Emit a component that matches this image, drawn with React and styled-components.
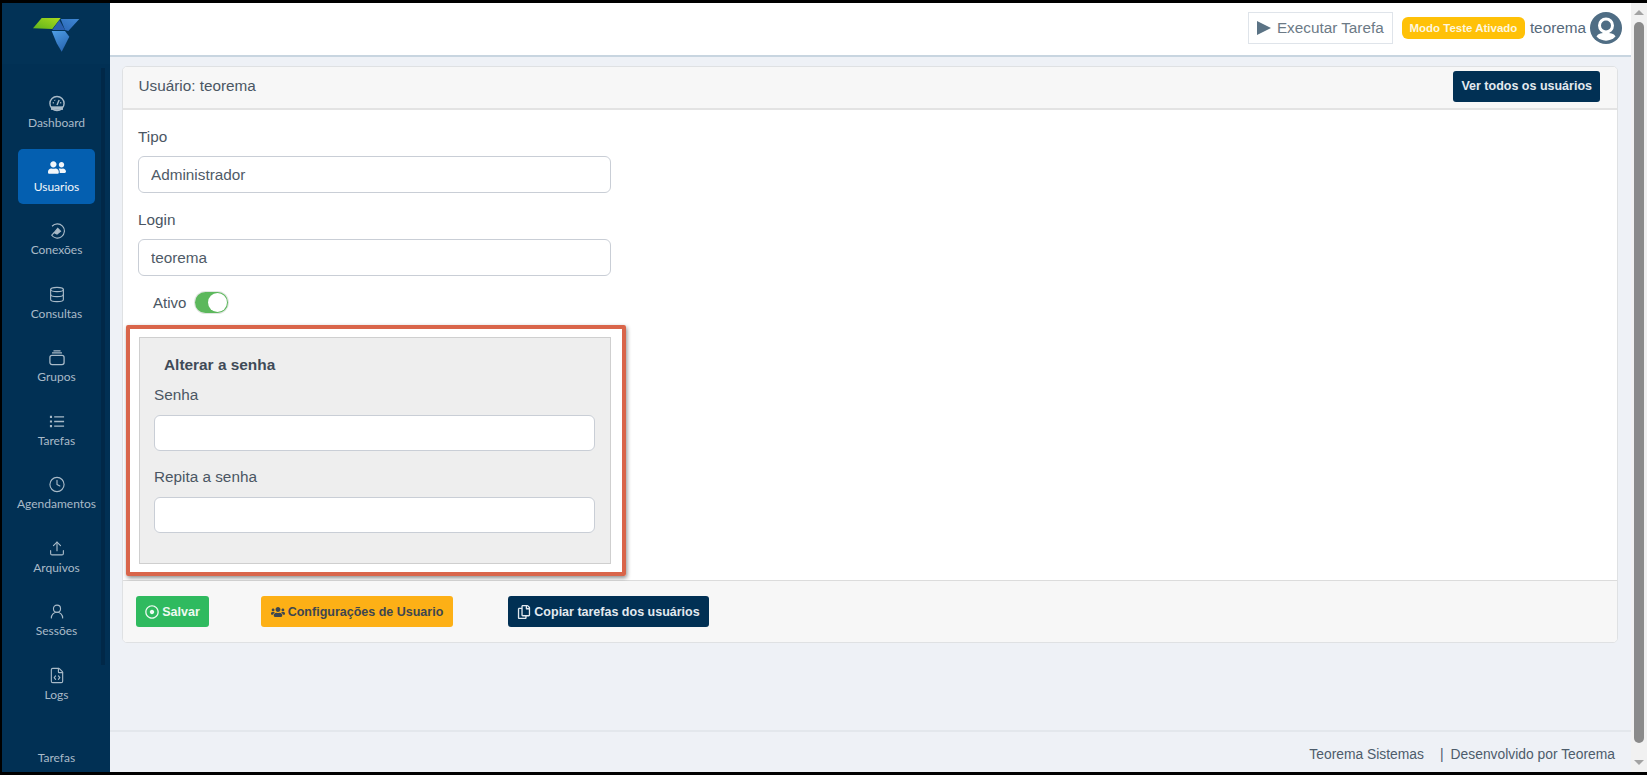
import React from "react";
import styled, { createGlobalStyle } from "styled-components";
import { Clock, Database, FileCode, Upload, UserRound } from "lucide-react";
import { FaUsers, FaUserFriends, FaRegDotCircle, FaRegCopy } from "react-icons/fa";

const GlobalStyle = createGlobalStyle`
  html, body {
    margin: 0;
    padding: 0;
    overflow: hidden;
    background: #000;
  }
  * {
    box-sizing: border-box;
  }
`;

const Frame = styled.div`
  width: 1647px;
  height: 775px;
  padding: 3px 0 3px 2px;
  display: flex;
  background: #000;
  font-family: "Liberation Sans", Arial, sans-serif;
  overflow: hidden;
`;

const Sidebar = styled.aside`
  width: 108px;
  flex: none;
  display: flex;
  flex-direction: column;
  background: #013054;
  overflow: hidden;
`;

const LogoBox = styled.div`
  height: 61px;
  flex: none;
  padding: 15px 0 0 31px;
  background: #023256;
`;

const Nav = styled.nav`
  position: relative;
  flex: 1;
  padding: 21px 0 0 16px;
`;

const NavTrack = styled.div`
  position: absolute;
  top: 4px;
  left: 99px;
  width: 4px;
  height: 597px;
  background: #012848;
`;

const NavItem = styled.a`
  width: 77px;
  height: 55px;
  margin-bottom: 8.5px;
  display: flex;
  flex-direction: column;
  align-items: center;
  justify-content: center;
  gap: 4px;
  border-radius: 5px;
  background: ${(p) => (p.$active ? "#045fb0" : "transparent")};
  color: ${(p) => (p.$active ? "#f2f6fa" : "#a9bac8")};
  font-family: Lato, "Liberation Sans", sans-serif;
  font-size: 12px;
  line-height: 14px;
  white-space: nowrap;

  svg {
    width: 18px;
    height: 17px;
    flex: none;
  }
`;

const TaskItem = styled(NavItem)`
  margin-top: 39px;
  height: auto;
  justify-content: flex-start;
  gap: 5px;
`;

const Main = styled.main`
  flex: 1;
  min-width: 0;
  display: flex;
  flex-direction: column;
  background: #eef1f6;
`;

const TopBar = styled.header`
  height: 54px;
  flex: none;
  display: flex;
  align-items: center;
  justify-content: flex-end;
  padding: 0 9px 2px 0;
  background: #fff;
  border-bottom: 2px solid #c8d5e0;
`;

const RunButton = styled.div`
  width: 145px;
  height: 32px;
  display: flex;
  align-items: center;
  gap: 6px;
  padding-left: 8px;
  margin-right: 9px;
  border: 1px solid #dfe4ea;
  color: #6c7a86;
  font-size: 15.3px;
  white-space: nowrap;
`;

const Badge = styled.span`
  width: 123px;
  height: 22px;
  display: flex;
  align-items: center;
  justify-content: center;
  border-radius: 6px;
  background: #ffc107;
  color: #fdf6df;
  font-size: 11.5px;
  font-weight: 700;
  white-space: nowrap;
`;

const UserName = styled.span`
  margin: 0 4px 0 5px;
  color: #55697a;
  font-size: 15.3px;
`;

const Content = styled.div`
  flex: 1;
  padding: 9px 13px 0 12px;
`;

const Card = styled.section`
  height: 577px;
  display: flex;
  flex-direction: column;
  border: 1px solid #dfe1e3;
  border-radius: 5px;
  background: #fff;
  overflow: hidden;
`;

const CardHeader = styled.div`
  height: 43px;
  flex: none;
  display: flex;
  align-items: center;
  justify-content: space-between;
  padding: 0 17px 3px 15.5px;
  background: #f7f7f7;
  border-bottom: 2px solid #e3e3e3;
  color: #4a5663;
  font-size: 15.3px;
`;

const Button = styled.button`
  height: 31px;
  display: inline-flex;
  align-items: center;
  justify-content: center;
  gap: 3px;
  padding: 0 8px;
  border: 0;
  border-radius: 3px;
  background: ${(p) => p.$bg};
  color: ${(p) => p.$fg};
  font-family: inherit;
  font-size: 12.5px;
  font-weight: ${(p) => p.$weight || 400};
  white-space: nowrap;

  svg {
    width: 14px;
    height: 14px;
    flex: none;
  }
`;

const CardBody = styled.div`
  flex: 1;
  padding: 17px 0 0 3px;
  border-bottom: 1px solid #dcdcdc;
`;

const Field = styled.div`
  width: 473px;
  margin: 0 0 ${(p) => p.$gap || 17}px 12px;
`;

const Label = styled.label`
  display: block;
  margin-bottom: 9px;
  color: #4a5663;
  font-size: 15.3px;
  line-height: 20px;
`;

const Input = styled.input`
  display: block;
  width: 100%;
  height: 37px;
  padding: 0 12px;
  border: 1px solid #c9ced6;
  border-radius: 6px;
  outline: none;
  background: #fff;
  color: #4f5b67;
  font-family: inherit;
  font-size: 15.3px;
`;

const ActiveRow = styled.div`
  display: flex;
  align-items: center;
  gap: 9px;
  height: 21px;
  margin: 0 0 12px 27px;
  color: #4a5663;
  font-size: 15px;
`;

const Toggle = styled.span`
  position: relative;
  width: 33px;
  height: 21px;
  border-radius: 11px;
  background: #5cb85c;
  box-shadow: 0 0 0 1px #e1e6e1;

  &::after {
    content: "";
    position: absolute;
    top: 1px;
    right: 1px;
    width: 19px;
    height: 19px;
    border-radius: 50%;
    background: #fff;
  }
`;

const Highlight = styled.div`
  width: 500px;
  height: 251px;
  padding: 8px 11px 8px 9px;
  border: 4px solid #d9654a;
  border-radius: 2px;
  box-shadow: 1px 2px 4px rgba(0, 0, 0, 0.45);
`;

const PasswordPanel = styled.div`
  height: 100%;
  padding: 18px 15px 0 14px;
  background: #eee;
  border: 1px solid #cfcfcf;
`;

const PanelTitle = styled.div`
  margin: 0 0 11px 10px;
  color: #3f4a57;
  font-size: 15.4px;
  font-weight: 700;
  line-height: 18px;
`;

const PanelField = styled.div`
  margin-bottom: ${(p) => p.$gap || 0}px;
`;

const PanelLabel = styled(Label)`
  margin-bottom: 10px;
`;

const PanelInput = styled(Input)`
  height: 36px;
`;

const CardFooter = styled.div`
  height: 61px;
  flex: none;
  display: flex;
  align-items: flex-start;
  padding: 15px 0 0 13px;
  background: #f7f7f7;
`;

const FooterButton = styled(Button)`
  margin-right: ${(p) => p.$gap}px;
  width: ${(p) => p.$width}px;
`;

const Footer = styled.footer`
  height: 42px;
  flex: none;
  display: flex;
  align-items: center;
  justify-content: flex-end;
  padding: 3px 16px 0 0;
  border-top: 2px solid #e3e7ec;
  color: #4d5c6b;
  font-size: 13.85px;
`;

const Divider = styled.span`
  margin: 0 7px 0 16px;
`;

const ScrollBar = styled.div`
  width: 16px;
  flex: none;
  display: flex;
  flex-direction: column;
  align-items: center;
  justify-content: space-between;
  padding: 7px 0;
  background: #f1f1f1;
`;

const ScrollThumb = styled.div`
  flex: 1;
  width: 10px;
  margin: 7px 0 17px;
  border-radius: 5px;
  background: #8a8a8a;
`;

const Arrow = styled.span`
  width: 0;
  height: 0;
  border-left: 5px solid transparent;
  border-right: 5px solid transparent;
  ${(p) =>
    p.$down
      ? "border-top: 5px solid #a3a3a3;"
      : "border-bottom: 5px solid #a3a3a3;"}
`;

const Logo = () => (
  <svg width="48" height="36" viewBox="0 0 48 36">
    <defs>
      <linearGradient id="logoGreen" x1="0" y1="1" x2="1" y2="0">
        <stop offset="0" stopColor="#5fb31c" />
        <stop offset="1" stopColor="#a8da1f" />
      </linearGradient>
      <linearGradient id="logoRight" x1="1" y1="0" x2="0" y2="1">
        <stop offset="0" stopColor="#3f88d4" />
        <stop offset="1" stopColor="#2b66b6" />
      </linearGradient>
      <linearGradient id="logoLower" x1="0" y1="0" x2="0.5" y2="1">
        <stop offset="0" stopColor="#4f9fe6" />
        <stop offset="1" stopColor="#2a68b4" />
      </linearGradient>
    </defs>
    <polygon points="0,10.300 8.700,0 27.700,0 19.300,11" fill="url(#logoGreen)" />
    <polygon points="27.700,1 46.300,1 35.300,13 32,12" fill="url(#logoRight)" />
    <polygon points="19.300,12 26.300,2 32,12" fill="#2a5fb0" />
    <polygon points="18.700,13 32,13 36.300,18.700 28.700,33.700 23.700,25.300" fill="url(#logoLower)" />
  </svg>
);

const GaugeIcon = () => (
  <svg viewBox="0 0 24 24" fill="none" stroke="currentColor" strokeWidth="2">
    <circle cx="12" cy="12" r="10" />
    <path d="M3.500 18.500h17" strokeWidth="5" />
    <path d="M12 14l3-7M6 11h1.500M16.500 11H18M8.500 7l.7.9" />
  </svg>
);

const PlugIcon = () => (
  <svg viewBox="0 0 24 24" fill="none" stroke="currentColor" strokeWidth="1.6">
    <path d="M5 6a10 10 0 1 1-1 12" />
    <path d="M8 15l5-6 4 4-5 4z" fill="currentColor" />
    <path d="M8 15l-3 3" />
  </svg>
);

const TrayIcon = () => (
  <svg viewBox="0 0 24 24" fill="none" stroke="currentColor" strokeWidth="1.8">
    <rect x="2" y="9" width="20" height="13" rx="3" />
    <path d="M5 5.500h14M7 2.500h10" />
  </svg>
);

const ListIcon = () => (
  <svg viewBox="0 0 24 24" fill="none" stroke="currentColor" strokeWidth="1.800">
    <path d="M8 5.500h14M8 12h14M8 18.500h14" />
    <path d="M2 5.500h3M2 12h3M2 18.500h3" strokeWidth="3" />
  </svg>
);

const NAV_ITEMS = [
  { label: "Dashboard", icon: <GaugeIcon /> },
  { label: "Usuarios", icon: <FaUserFriends />, active: true },
  { label: "Conexões", icon: <PlugIcon /> },
  { label: "Consultas", icon: <Database strokeWidth={1.6} /> },
  { label: "Grupos", icon: <TrayIcon /> },
  { label: "Tarefas", icon: <ListIcon /> },
  { label: "Agendamentos", icon: <Clock strokeWidth={1.6} /> },
  { label: "Arquivos", icon: <Upload strokeWidth={1.6} /> },
  { label: "Sessões", icon: <UserRound strokeWidth={1.6} /> },
  { label: "Logs", icon: <FileCode strokeWidth={1.6} /> },
];

const PlayIcon = () => (
  <svg width="14" height="14" viewBox="0 0 14 14">
    <polygon points="0,0 14,7 0,14" fill="#5b7385" />
  </svg>
);

const Avatar = () => (
  <svg width="32" height="32" viewBox="0 0 32 32">
    <circle cx="16" cy="16" r="16" fill="#4f6d84" />
    <circle cx="16" cy="13.500" r="6.500" fill="#4f6d84" stroke="#fff" strokeWidth="3" />
    <path d="M6.500 24.500C8 21.500 12 20.800 16 20.800s8 .7 9.500 3.700a12.800 12.800 0 0 1-19 0z" fill="#fff" />
  </svg>
);

function App() {
  return (
    <>
      <GlobalStyle />
      <Frame>
        <Sidebar>
          <LogoBox>
            <Logo />
          </LogoBox>
          <Nav>
            <NavTrack />
            {NAV_ITEMS.map((item) => (
              <NavItem key={item.label} $active={item.active}>
                {item.icon}
                {item.label}
              </NavItem>
            ))}
            <TaskItem>
              Tarefas
              <span>Padrão</span>
            </TaskItem>
          </Nav>
        </Sidebar>
        <Main>
          <TopBar>
            <RunButton>
              <PlayIcon />
              Executar Tarefa
            </RunButton>
            <Badge>Modo Teste Ativado</Badge>
            <UserName>teorema</UserName>
            <Avatar />
          </TopBar>
          <Content>
            <Card>
              <CardHeader>
                Usuário: teorema
                <Button $bg="#013054" $fg="#e3e9ef" $weight={700}>
                  Ver todos os usuários
                </Button>
              </CardHeader>
              <CardBody>
                <Field>
                  <Label>Tipo</Label>
                  <Input value="Administrador" readOnly />
                </Field>
                <Field $gap={16}>
                  <Label>Login</Label>
                  <Input value="teorema" readOnly />
                </Field>
                <ActiveRow>
                  Ativo
                  <Toggle />
                </ActiveRow>
                <Highlight>
                  <PasswordPanel>
                    <PanelTitle>Alterar a senha</PanelTitle>
                    <PanelField $gap={16}>
                      <PanelLabel>Senha</PanelLabel>
                      <PanelInput readOnly />
                    </PanelField>
                    <PanelField>
                      <PanelLabel>Repita a senha</PanelLabel>
                      <PanelInput readOnly />
                    </PanelField>
                  </PasswordPanel>
                </Highlight>
              </CardBody>
              <CardFooter>
                <FooterButton $bg="#2fba5f" $fg="#eef9f2" $weight={700} $width={73} $gap={52}>
                  <FaRegDotCircle />
                  Salvar
                </FooterButton>
                <FooterButton $bg="#fdb016" $fg="#3d4650" $weight={700} $width={192} $gap={55}>
                  <FaUsers />
                  Configurações de Usuario
                </FooterButton>
                <FooterButton $bg="#013054" $fg="#e3e9ef" $weight={700} $width={201} $gap={0}>
                  <FaRegCopy />
                  Copiar tarefas dos usuários
                </FooterButton>
              </CardFooter>
            </Card>
          </Content>
          <Footer>
            Teorema Sistemas
            <Divider>|</Divider>
            Desenvolvido por Teorema
          </Footer>
        </Main>
        <ScrollBar>
          <Arrow />
          <ScrollThumb />
          <Arrow $down />
        </ScrollBar>
      </Frame>
    </>
  );
}

export default App;
